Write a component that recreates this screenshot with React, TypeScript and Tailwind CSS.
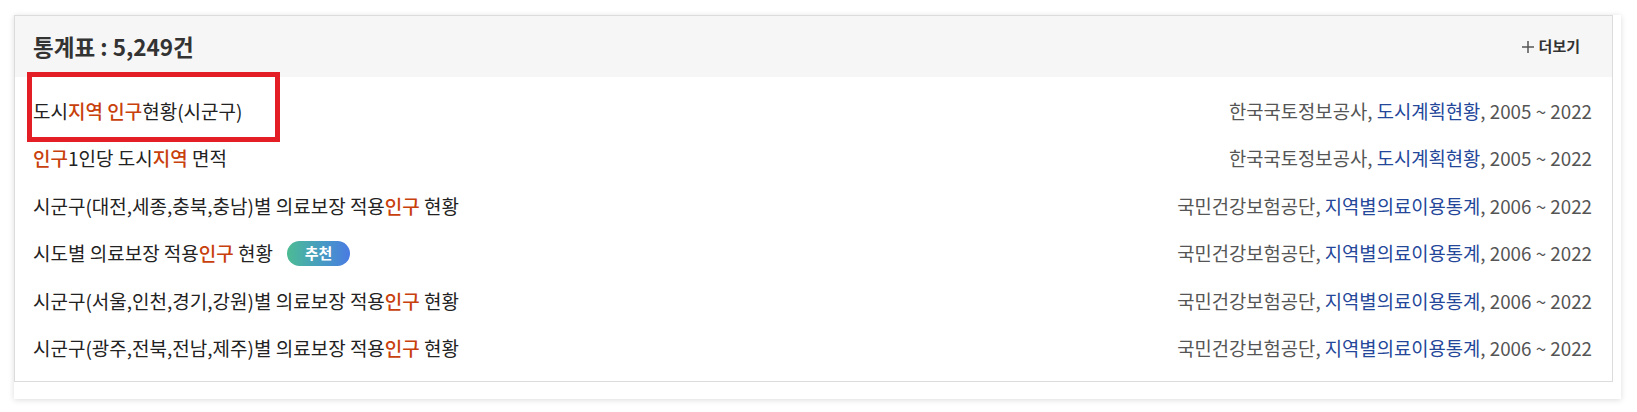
import React from "react";

type Part = { text: string; hit?: boolean };

interface StatRow {
  id: string;
  title: Part[];
  org: string;
  series: string;
  period: string;
  recommended?: boolean;
  marked?: boolean;
}

const rows: StatRow[] = [
  {
    id: "r1",
    title: [{ text: "도시" }, { text: "지역", hit: true }, { text: " " }, { text: "인구", hit: true }, { text: "현황(시군구)" }],
    org: "한국국토정보공사",
    series: "도시계획현황",
    period: "2005 ~ 2022",
    marked: true,
  },
  {
    id: "r2",
    title: [{ text: "인구", hit: true }, { text: "1인당 도시" }, { text: "지역", hit: true }, { text: " 면적" }],
    org: "한국국토정보공사",
    series: "도시계획현황",
    period: "2005 ~ 2022",
  },
  {
    id: "r3",
    title: [{ text: "시군구(대전,세종,충북,충남)별 의료보장 적용" }, { text: "인구", hit: true }, { text: " 현황" }],
    org: "국민건강보험공단",
    series: "지역별의료이용통계",
    period: "2006 ~ 2022",
  },
  {
    id: "r4",
    title: [{ text: "시도별 의료보장 적용" }, { text: "인구", hit: true }, { text: " 현황" }],
    org: "국민건강보험공단",
    series: "지역별의료이용통계",
    period: "2006 ~ 2022",
    recommended: true,
  },
  {
    id: "r5",
    title: [{ text: "시군구(서울,인천,경기,강원)별 의료보장 적용" }, { text: "인구", hit: true }, { text: " 현황" }],
    org: "국민건강보험공단",
    series: "지역별의료이용통계",
    period: "2006 ~ 2022",
  },
  {
    id: "r6",
    title: [{ text: "시군구(광주,전북,전남,제주)별 의료보장 적용" }, { text: "인구", hit: true }, { text: " 현황" }],
    org: "국민건강보험공단",
    series: "지역별의료이용통계",
    period: "2006 ~ 2022",
  },
];

export default function App() {
  return (
    <div className="min-h-[412px] bg-white pl-[14px] pt-[15px] font-['Noto_Sans_CJK_KR','Noto_Sans',sans-serif]">
      <div className="w-[1607px] bg-white pb-[17px] pr-[8px] shadow-[0_1px_6px_rgba(0,0,0,0.14)]">
        <div className="border border-[#dcdcdc]">
          <div className="flex h-[61px] items-center justify-between bg-[#f6f6f6] pl-[18px] pr-[32px]">
            <h2 className="text-[22.5px] font-bold text-[#333]">통계표 : 5,249건</h2>
            <button className="flex items-center gap-[5px] text-[15px] font-bold text-[#333]">
              <svg width="12" height="12" viewBox="0 0 12 12" className="text-[#555]">
                <path d="M6 0v12M0 6h12" stroke="currentColor" strokeWidth="1.5" />
              </svg>
              더보기
            </button>
          </div>
          <ul className="pb-[9px] pl-[18px] pr-[20px] pt-[10px]">
            {rows.map((row) => (
              <li key={row.id} className="relative flex h-[47.5px] items-center justify-between">
                <div className="flex items-center text-[19px] text-[#222]">
                  <span>
                    {row.title.map((part, i) => (
                      <span key={i} className={part.hit ? "font-medium text-[#c8400c]" : undefined}>
                        {part.text}
                      </span>
                    ))}
                  </span>
                  {row.recommended && (
                    <span className="ml-[14px] flex h-[25px] w-[63px] items-center justify-center rounded-full bg-gradient-to-r from-[#4dbb93] to-[#4a7ae2] text-[15px] font-bold text-white">
                      추천
                    </span>
                  )}
                </div>
                <p className="text-[18.8px] text-[#555]">
                  {row.org}, <span className="text-[#24479a]">{row.series}</span>, {row.period}
                </p>
                {row.marked && (
                  <span className="pointer-events-none absolute left-[-6px] top-[-15px] h-[70px] w-[253px] border-[5px] border-[#e31e24]" />
                )}
              </li>
            ))}
          </ul>
        </div>
      </div>
    </div>
  );
}
